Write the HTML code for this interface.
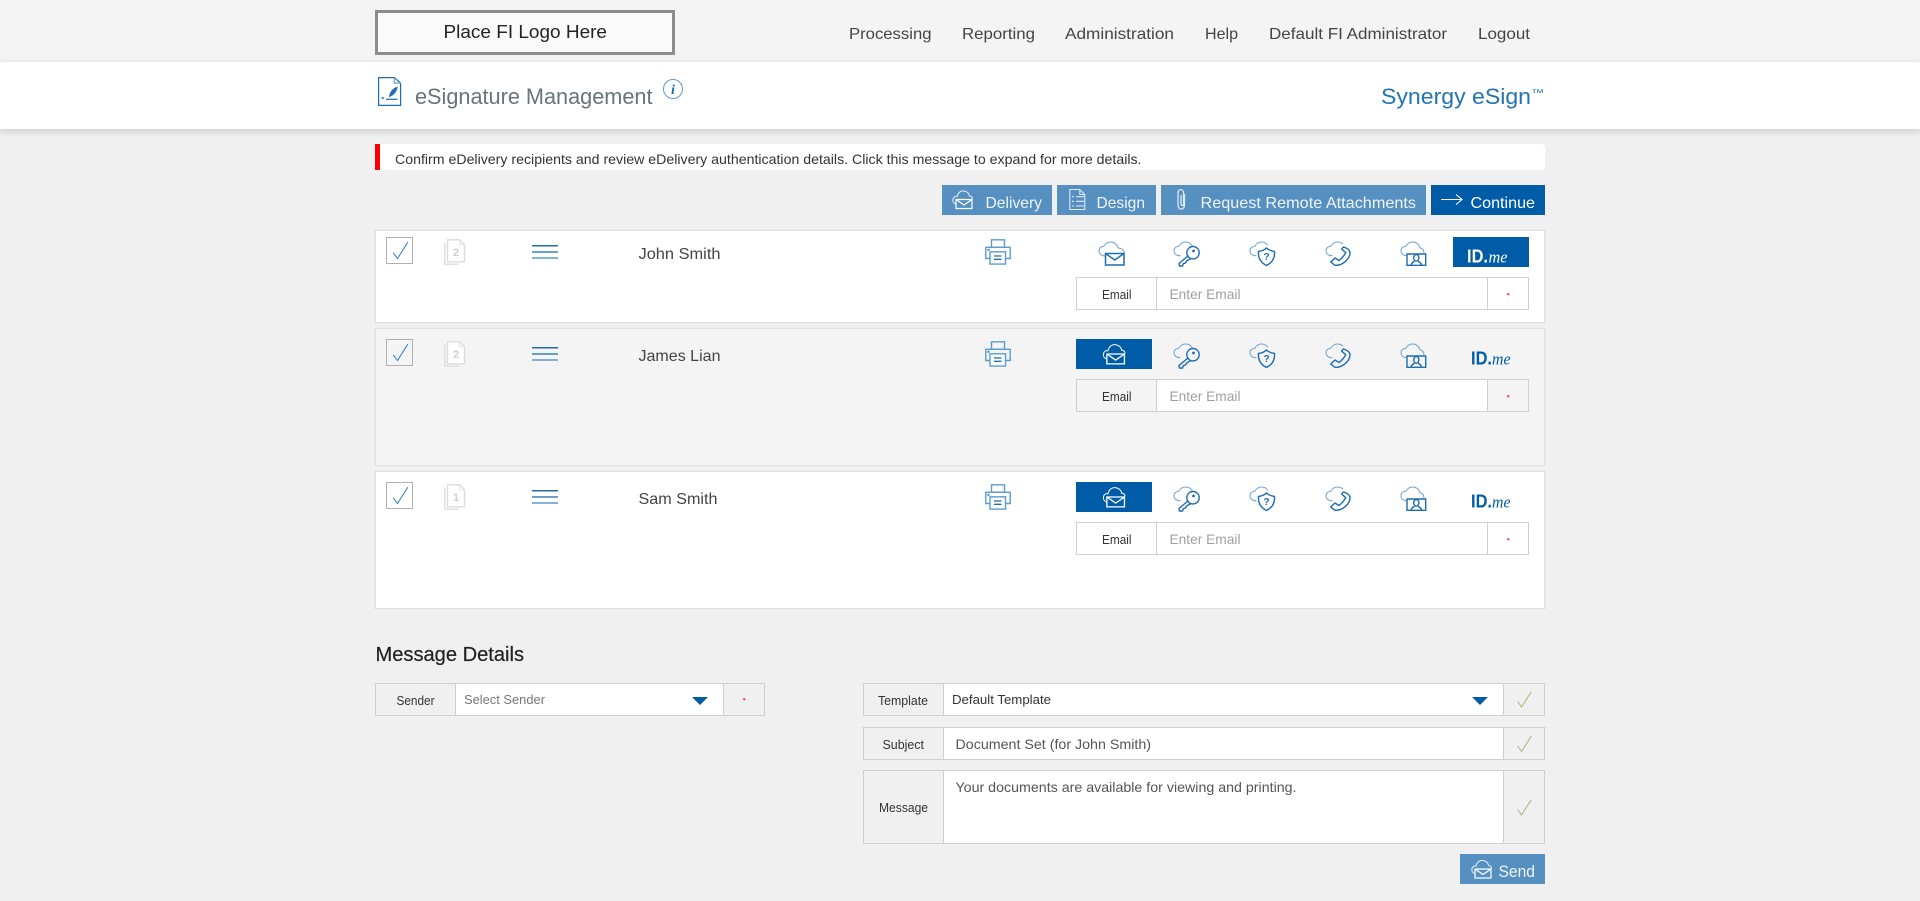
<!DOCTYPE html>
<html lang="en"><head><meta charset="utf-8"><title>eSignature Management</title>
<style>
html,body{margin:0;padding:0;width:1920px;height:901px;overflow:hidden;background:#f0f0f0;font-family:"Liberation Sans",sans-serif}
.b{position:absolute;box-sizing:border-box}
.g{border:1px solid #cfcfcf}
.r{box-shadow:0 0 1px #d8d8d8;border:1px solid #e0e0e0}
svg{position:absolute;left:0;top:0}
text{font-family:"Liberation Sans",sans-serif}
.ic{fill:none;stroke:#1f6cae;stroke-width:1.400}
.cl{fill:none;stroke:#6fa3cf;stroke-width:1}
</style></head><body>
<div class="b" style="left:0;top:0;width:1920px;height:62px;background:#f4f4f4"></div>
<div class="b" style="left:0;top:62px;width:1920px;height:67px;background:#fff;box-shadow:0 2px 7px rgba(0,0,0,.16)"></div>
<div class="b" style="left:375px;top:10px;width:300px;height:45px;background:#fafafa;border:3px solid #8c8c8c"></div>
<div class="b" style="left:375px;top:144px;width:1170px;height:26px;background:#fff;border-left:5px solid #f00;border-radius:0 3px 3px 0"></div>
<div class="b" style="left:942px;top:185px;width:110px;height:30px;background:#5590c1"></div>
<div class="b" style="left:1057px;top:185px;width:99px;height:30px;background:#5590c1"></div>
<div class="b" style="left:1161px;top:185px;width:265px;height:30px;background:#5590c1"></div>
<div class="b" style="left:1431px;top:185px;width:114px;height:30px;background:#005ca6"></div>

<div class="b r" style="left:375px;top:230px;width:1170px;height:93px;background:#fff"></div>
<div class="b r" style="left:375px;top:328px;width:1170px;height:138px;background:#f4f4f4"></div>
<div class="b r" style="left:375px;top:471px;width:1170px;height:138px;background:#fff"></div>

<div class="b" style="left:386px;top:237px;width:27px;height:27px;border:1px solid #b0b0b0"></div>
<div class="b" style="left:386px;top:339px;width:27px;height:27px;border:1px solid #b0b0b0"></div>
<div class="b" style="left:386px;top:482px;width:27px;height:27px;border:1px solid #b0b0b0"></div>

<div class="b" style="left:1453px;top:237px;width:76px;height:30px;background:#005ca6"></div>
<div class="b" style="left:1076px;top:339px;width:76px;height:30px;background:#005ca6"></div>
<div class="b" style="left:1076px;top:482px;width:76px;height:30px;background:#005ca6"></div>

<div class="b g" style="left:1076px;top:277px;width:453px;height:33px;background:#fff"></div>
<div class="b g" style="left:1156px;top:277px;width:332px;height:33px;border-width:0 1px"></div>
<div class="b g" style="left:1076px;top:379px;width:453px;height:33px;background:#f4f4f4"></div>
<div class="b g" style="left:1156px;top:379px;width:332px;height:33px;background:#fff"></div>
<div class="b g" style="left:1076px;top:522px;width:453px;height:33px;background:#fff"></div>
<div class="b g" style="left:1156px;top:522px;width:332px;height:33px;border-width:0 1px"></div>

<div class="b g" style="left:375px;top:683px;width:390px;height:33px"></div>
<div class="b g" style="left:455px;top:683px;width:269px;height:33px;background:#fff"></div>

<div class="b g" style="left:863px;top:683px;width:682px;height:33px"></div>
<div class="b g" style="left:943px;top:683px;width:561px;height:33px;background:#fff"></div>
<div class="b g" style="left:863px;top:727px;width:682px;height:33px"></div>
<div class="b g" style="left:943px;top:727px;width:561px;height:33px;background:#fff"></div>
<div class="b g" style="left:863px;top:770px;width:682px;height:74px"></div>
<div class="b g" style="left:943px;top:770px;width:561px;height:74px;background:#fff"></div>
<div class="b" style="left:1460px;top:854px;width:85px;height:30px;background:#5590c1"></div>

<svg width="1920" height="901" viewBox="0 0 1920 901" xmlns="http://www.w3.org/2000/svg">
<defs>
<symbol id="mail" viewBox="0 0 28 27" overflow="visible"><path class="cl" d="M7 16C3.500 16 1 13.800 1 10.800 1 8.200 3 6.200 6 6.200 7 3.500 10 1.800 13 2c3.500.2 6.300 2.500 7 6 3.300 0 6 2 6.500 5.200"/><path fill="none" stroke="#1f6cae" stroke-width="1.500" d="M7.500 13.500h18.500v11.500h-18.500zM7.500 13.500l9.250 6.500 9.250-6.500"/></symbol>
<symbol id="mailw" viewBox="0 0 21 20" overflow="visible"><path fill="none" stroke="#e8f0f7" stroke-width="1" d="M4 14.500C1.500 14 .5 12 1 9.500 1.500 7.500 3.500 6.500 5 7 6 3 9 1 12 1.500c3 .5 5 2.500 5.500 5 2 .2 3 1.500 3 3"/><path fill="none" stroke="#fff" stroke-width="1.200" d="M4 10h16v9H4zM4 10l8 5.500 8-5.500"/></symbol>
<symbol id="key" viewBox="0 0 28 27" overflow="visible"><path class="cl" d="M7.500 15.800C3.500 15.800 1 13.800 1 10.800 1 8.200 3 6.200 6 6.200 7 3.500 10 1.800 13 2c3 .2 5.500 1.800 6.500 4.500"/><circle class="ic" cx="20" cy="12.700" r="6.200"/><circle cx="20.500" cy="11" r="1.400" fill="#1f6cae"/><path class="ic" d="M15.500 15.500L6 23.500 6.500 26H9.500L10.500 23.500 12.500 23 13.500 21 18 18.500"/></symbol>
<symbol id="shield" viewBox="0 0 28 27" overflow="visible"><path class="cl" d="M7.500 15.800C3.500 15.800 1 13.800 1 10.800 1 8.200 3 6.200 6 6.200 7 3.500 10 1.800 13 2c2.500.2 4.500 1.300 6 3.300"/><path class="ic" d="M9.500 11.500c3.500-.5 6-1.500 8-3.500 2 2 4.500 3 8 3.500 .5 6-2 11-8 14-6-3-8.500-8-8-14z"/><text x="17.500" y="20" font-size="10" font-weight="700" fill="#1f6cae" text-anchor="middle">?</text></symbol>
<symbol id="phone" viewBox="0 0 28 27" overflow="visible"><path class="cl" d="M7.500 15.800C3.500 15.800 1 13.800 1 10.800 1 8.200 3 6.200 6 6.200 7 3.500 10 1.800 13 2c1.800.1 3.500.8 5 2"/><path class="ic" d="M18.300 7C22 8 25 10 25 13 25 19 17 26 10 25.300L5.700 22 10 18 14 20.500C16 19 19 16 20.700 12.700L16.700 9z"/></symbol>
<symbol id="person" viewBox="0 0 28 27" overflow="visible"><path class="cl" d="M7 15.800C3.500 15.800 1 13.800 1 10.800 1 8.200 3 6.200 6 6.200 7 3.500 10 1.800 13 2c3.500.2 6.300 2.500 7 6 2.500 0 3.800 1.800 4 5"/><path class="ic" d="M7 14h18.700v11.300H7z"/><ellipse class="ic" cx="16.300" cy="17.800" rx="2.600" ry="3.300"/><path class="ic" d="M11 25.300c.5-2.300 1.800-3.300 3.500-4M21.600 25.300c-.5-2.300-1.800-3.300-3.500-4"/></symbol>
<symbol id="print" viewBox="0 0 26 26" overflow="visible"><path fill="none" stroke="#5b9bd0" stroke-width="1.400" d="M6.500.8h13v7.500h-13z"/><path fill="none" stroke="#5b9bd0" stroke-width="1.400" d="M5 19.500H.8V8.300h24.400v11.200H21"/><path fill="#fff" stroke="#5b9bd0" stroke-width="1.400" d="M5 12.800h15.500v12.300H5z"/><path d="M9 17h7.500M9 20.300h7.500" stroke="#1f6cae" stroke-width="1.300"/><rect x="2.500" y="9.800" width="2" height="2" fill="#3b86c4"/></symbol>
<symbol id="doc" viewBox="0 0 21 26" overflow="visible"><path fill="none" stroke="#dedede" stroke-width="1.400" d="M.8 3.500v21.700h14"/><path fill="#fff" stroke="#dcdcdc" stroke-width="1.400" d="M3.500.8h12l5 5v17H3.500z"/><path fill="none" stroke="#e4e4e4" d="M15.500.8v5h5"/></symbol>
<symbol id="ham" viewBox="0 0 26 14" overflow="visible"><path d="M0 .8h26" stroke="#1f6cae" stroke-width="1.500"/><path d="M0 7h26" stroke="#3b80ba" stroke-width="1.400"/><path d="M0 13h26" stroke="#5c9acb" stroke-width="1.400"/></symbol>
<symbol id="chk" viewBox="0 0 16 18" overflow="visible"><path fill="none" stroke="#2f7fc4" stroke-width="1" d="M.7 11.300L5 17 15.300.7"/></symbol>
<symbol id="gchk" viewBox="0 0 15 17" overflow="visible"><path fill="none" stroke="#a6bb72" stroke-width="1" d="M.7 10.500L4.500 16 14.300.7"/></symbol>
</defs>

<text x="443.500" y="38" font-size="18" fill="#222" textLength="163.500" lengthAdjust="spacingAndGlyphs">Place FI Logo Here</text>
<g font-size="16" fill="#444">
<text x="849" y="39" textLength="82.500" lengthAdjust="spacingAndGlyphs">Processing</text>
<text x="962" y="39" textLength="73" lengthAdjust="spacingAndGlyphs">Reporting</text>
<text x="1065" y="39" textLength="109" lengthAdjust="spacingAndGlyphs">Administration</text>
<text x="1205" y="39" textLength="33" lengthAdjust="spacingAndGlyphs">Help</text>
<text x="1269" y="39" textLength="178" lengthAdjust="spacingAndGlyphs">Default FI Administrator</text>
<text x="1478" y="39" textLength="52" lengthAdjust="spacingAndGlyphs">Logout</text>
</g>

<!-- page icon -->
<g fill="none" stroke="#1f6cae" stroke-width="1.200"><path d="M378.600 77.600h15.700l6.300 5.500v22.300h-22z"/><path d="M394.300 77.600v5.500h6.300" stroke="#6fa3cf"/></g>
<path d="M389 97c.3-4.500 3.500-9 8.700-10.500-.7 5-4 9.500-8.700 10.500z" fill="#1f6cae"/><path d="M386 99.300h11.500" stroke="#1f6cae" stroke-width="1.200"/><path d="M381.700 97l2 2m0-2l-2 2" stroke="#1f6cae" stroke-width=".8"/>
<text x="415" y="104" font-size="22" fill="#68737c" textLength="237.500" lengthAdjust="spacingAndGlyphs">eSignature Management</text>
<circle cx="673" cy="89" r="9.500" fill="none" stroke="#5f9acb" stroke-width="1"/>
<text x="673" y="94" font-size="14" font-weight="700" font-style="italic" fill="#1a6aaa" text-anchor="middle" style="font-family:'Liberation Serif',serif">i</text>
<text x="1381" y="104" font-size="22" fill="#2273b3" textLength="150" lengthAdjust="spacingAndGlyphs">Synergy eSign</text>
<text x="1531" y="96" font-size="10" fill="#2273b3" textLength="13" lengthAdjust="spacingAndGlyphs">™</text>

<text x="395" y="164" font-size="14" fill="#333" textLength="746.500" lengthAdjust="spacingAndGlyphs">Confirm eDelivery recipients and review eDelivery authentication details. Click this message to expand for more details.</text>

<!-- buttons -->
<use href="#mailw" x="952" y="189.500" width="21" height="20"/>
<g font-size="16" fill="#f0f5fa">
<text x="985.500" y="208" textLength="56.500" lengthAdjust="spacingAndGlyphs">Delivery</text>
<text x="1096.500" y="208" textLength="48.500" lengthAdjust="spacingAndGlyphs">Design</text>
<text x="1200.500" y="208" textLength="215.500" lengthAdjust="spacingAndGlyphs">Request Remote Attachments</text>
<text x="1470.500" y="208" textLength="64.500" lengthAdjust="spacingAndGlyphs" fill="#fff">Continue</text>
</g>
<g fill="none" stroke="#dfeaf4" stroke-width="1.100">
<path d="M1069.800 189.500h10l5 5v15h-15z"/><path d="M1079.800 189.500v5h5"/>
<path d="M1072 196.700h2M1076 196.700h8M1072 201.300h2M1076 201.300h8M1072 206h2M1076 206h8"/>
<path stroke-width="1.300" d="M1184.500 194v11c0 5.500-6.500 5.500-6.500 0V193c0-4.500 5.500-4.500 5.500 0v11c0 2-2.500 2-2.500 0v-9"/>
</g>
<path d="M1441 199.500h21M1456 194.500l6 5-6 5" fill="none" stroke="#fff" stroke-width="1.100"/>

<!-- row 1 -->
<use href="#chk" x="392.500" y="241.500" width="16" height="18"/>
<use href="#doc" x="444" y="239" width="21" height="26"/>
<text x="456" y="256" font-size="11" font-weight="700" fill="#cfcfcf" text-anchor="middle">2</text>
<use href="#ham" x="532" y="245" width="26" height="14"/>
<text x="638.500" y="259" font-size="16" fill="#444" textLength="82" lengthAdjust="spacingAndGlyphs">John Smith</text>
<use href="#print" x="985" y="239" width="26" height="26"/>
<use href="#mail" x="1098" y="240" width="28" height="27"/>
<use href="#key" x="1173" y="240" width="28" height="27"/>
<use href="#shield" x="1249" y="240" width="28" height="27"/>
<use href="#phone" x="1325" y="240" width="28" height="27"/>
<use href="#person" x="1400" y="240" width="28" height="27"/>
<text x="1467" y="262.500" font-size="18" font-weight="700" fill="#fff" textLength="21" lengthAdjust="spacingAndGlyphs">ID.</text>
<text x="1488.500" y="262.500" font-size="17" font-style="italic" fill="#fff" textLength="19" lengthAdjust="spacingAndGlyphs" style="font-family:'Liberation Serif',serif">me</text>
<text x="1102" y="299" font-size="13" fill="#333" textLength="29.500" lengthAdjust="spacingAndGlyphs">Email</text>
<text x="1169.500" y="299" font-size="14" fill="#a0a0a0" textLength="71" lengthAdjust="spacingAndGlyphs">Enter Email</text>
<rect x="1507" y="293" width="2.500" height="2.500" rx="1.200" fill="#e8505f"/>

<!-- row 2 -->
<use href="#chk" x="392.500" y="343.500" width="16" height="18"/>
<use href="#doc" x="444" y="341" width="21" height="26"/>
<text x="456" y="358" font-size="11" font-weight="700" fill="#cfcfcf" text-anchor="middle">2</text>
<use href="#ham" x="532" y="347" width="26" height="14"/>
<text x="638.500" y="361" font-size="16" fill="#444" textLength="82" lengthAdjust="spacingAndGlyphs">James Lian</text>
<use href="#print" x="985" y="341" width="26" height="26"/>
<use href="#mailw" x="1102" y="343" width="24" height="22"/>
<use href="#key" x="1173" y="342" width="28" height="27"/>
<use href="#shield" x="1249" y="342" width="28" height="27"/>
<use href="#phone" x="1325" y="342" width="28" height="27"/>
<use href="#person" x="1400" y="342" width="28" height="27"/>
<text x="1471" y="364.500" font-size="18" font-weight="700" fill="#005ca6" textLength="21" lengthAdjust="spacingAndGlyphs">ID.</text>
<text x="1492" y="364.500" font-size="17" font-style="italic" fill="#005ca6" textLength="18.500" lengthAdjust="spacingAndGlyphs" style="font-family:'Liberation Serif',serif">me</text>
<text x="1102" y="401" font-size="13" fill="#333" textLength="29.500" lengthAdjust="spacingAndGlyphs">Email</text>
<text x="1169.500" y="401" font-size="14" fill="#a0a0a0" textLength="71" lengthAdjust="spacingAndGlyphs">Enter Email</text>
<rect x="1507" y="395" width="2.500" height="2.500" rx="1.200" fill="#e8505f"/>

<!-- row 3 -->
<use href="#chk" x="392.500" y="486.500" width="16" height="18"/>
<use href="#doc" x="444" y="484" width="21" height="26"/>
<text x="456" y="501" font-size="11" font-weight="700" fill="#cfcfcf" text-anchor="middle">1</text>
<use href="#ham" x="532" y="490" width="26" height="14"/>
<text x="638.500" y="504" font-size="16" fill="#444" textLength="79" lengthAdjust="spacingAndGlyphs">Sam Smith</text>
<use href="#print" x="985" y="484" width="26" height="26"/>
<use href="#mailw" x="1102" y="486" width="24" height="22"/>
<use href="#key" x="1173" y="485" width="28" height="27"/>
<use href="#shield" x="1249" y="485" width="28" height="27"/>
<use href="#phone" x="1325" y="485" width="28" height="27"/>
<use href="#person" x="1400" y="485" width="28" height="27"/>
<text x="1471" y="507.500" font-size="18" font-weight="700" fill="#005ca6" textLength="21" lengthAdjust="spacingAndGlyphs">ID.</text>
<text x="1492" y="507.500" font-size="17" font-style="italic" fill="#005ca6" textLength="18.500" lengthAdjust="spacingAndGlyphs" style="font-family:'Liberation Serif',serif">me</text>
<text x="1102" y="544" font-size="13" fill="#333" textLength="29.500" lengthAdjust="spacingAndGlyphs">Email</text>
<text x="1169.500" y="544" font-size="14" fill="#a0a0a0" textLength="71" lengthAdjust="spacingAndGlyphs">Enter Email</text>
<rect x="1507" y="538" width="2.500" height="2.500" rx="1.200" fill="#e8505f"/>

<!-- message details -->
<text x="375.500" y="661" font-size="20" fill="#222" stroke="#222" stroke-width=".2" textLength="148.500" lengthAdjust="spacingAndGlyphs">Message Details</text>
<text x="396.500" y="705" font-size="13" fill="#333" textLength="38" lengthAdjust="spacingAndGlyphs">Sender</text>
<text x="464" y="704" font-size="13" fill="#777" textLength="81" lengthAdjust="spacingAndGlyphs">Select Sender</text>
<path d="M692 697h16l-8 8z" fill="#005ca6"/>
<rect x="743" y="698" width="2.500" height="2.500" rx="1.200" fill="#e8505f"/>

<g font-size="13" fill="#333">
<text x="878" y="705" textLength="50" lengthAdjust="spacingAndGlyphs">Template</text>
<text x="882.500" y="749" textLength="41.500" lengthAdjust="spacingAndGlyphs">Subject</text>
<text x="879" y="812" textLength="49" lengthAdjust="spacingAndGlyphs">Message</text>
</g>
<text x="952" y="704" font-size="13" fill="#333" textLength="99" lengthAdjust="spacingAndGlyphs">Default Template</text>
<path d="M1472 697h16l-8 8z" fill="#005ca6"/>
<text x="955.500" y="749" font-size="14" fill="#555" textLength="195.500" lengthAdjust="spacingAndGlyphs">Document Set (for John Smith)</text>
<text x="955.500" y="792" font-size="14" fill="#555" textLength="341" lengthAdjust="spacingAndGlyphs">Your documents are available for viewing and printing.</text>
<use href="#gchk" x="1517" y="691" width="15" height="17"/>
<use href="#gchk" x="1517" y="735.500" width="15" height="17"/>
<use href="#gchk" x="1517" y="799" width="15" height="17"/>

<use href="#mailw" x="1471" y="859" width="21" height="20"/>
<text x="1498.500" y="877" font-size="17" fill="#f0f5fa" textLength="36.500" lengthAdjust="spacingAndGlyphs">Send</text>
</svg>
</body></html>
